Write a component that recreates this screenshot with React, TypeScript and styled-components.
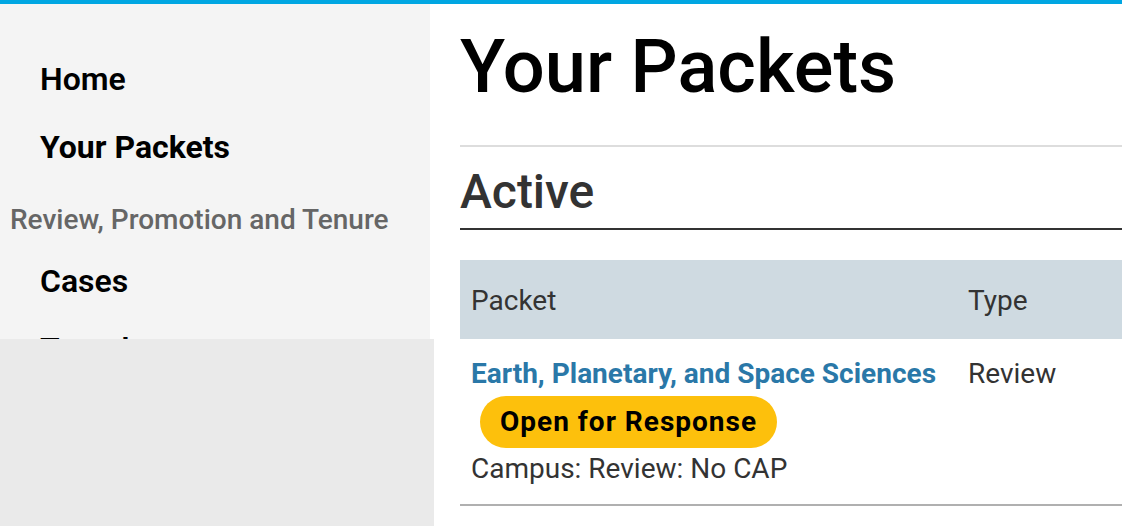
import React from "react";
import styled, { createGlobalStyle } from "styled-components";

const GlobalStyle = createGlobalStyle`
  html, body {
    margin: 0;
    padding: 0;
    background: #ffffff;
    font-family: Roboto, "Liberation Sans", Arial, sans-serif;
    overflow: hidden;
  }
  * { box-sizing: border-box; }
`;

const Page = styled.div`
  position: relative;
  width: 1122px;
  height: 526px;
  overflow: hidden;
  display: flex;
  flex-direction: column;
`;

const TopBar = styled.div`
  height: 4px;
  flex: none;
  background: #00a6e2;
`;

const Layout = styled.div`
  flex: 1;
  display: grid;
  grid-template-columns: 430px 1fr;
  min-height: 0;
`;

const Sidebar = styled.nav`
  background: #f4f4f4;
  padding-top: 41px;
  display: flex;
  flex-direction: column;
`;

const NavItem = styled.a<{ $active?: boolean }>`
  display: block;
  padding: 16px 40px;
  font-size: 32px;
  line-height: 36px;
  font-weight: ${(p) => (p.$active ? 700 : 600)};
  color: #000;
  text-decoration: none;
  white-space: nowrap;
`;

const NavSection = styled.div`
  margin: 23px 0 11px;
  padding-left: 10px;
  font-size: 28px;
  line-height: 32px;
  font-weight: 500;
  color: #666;
  white-space: nowrap;
`;

const Overlay = styled.div`
  position: absolute;
  left: 0;
  top: 339px;
  width: 434px;
  height: 187px;
  background: #eaeaea;
`;

const Main = styled.main`
  padding-left: 30px;
  min-width: 0;
  overflow: hidden;
`;

const Title = styled.h1`
  margin: 19px 0 0;
  font-size: 74px;
  line-height: 88px;
  font-weight: 500;
  color: #000;
  white-space: nowrap;
`;

const Rule = styled.hr`
  margin: 34px 0 0;
  border: 0;
  height: 2px;
  background: #dddddd;
`;

const SectionTitle = styled.h2`
  margin: 17px 0 0;
  padding-bottom: 8px;
  font-size: 48px;
  line-height: 56px;
  font-weight: 500;
  color: #333;
  border-bottom: 2px solid #333;
`;

const Table = styled.table`
  margin-top: 30px;
  width: 900px;
  border-collapse: collapse;
  font-size: 28px;
  line-height: 32px;
  color: #333;
`;

const HeadCell = styled.th<{ $width?: number }>`
  background: #cfdae1;
  text-align: left;
  font-weight: 400;
  padding: 25px 11px 22px;
  width: ${(p) => (p.$width ? `${p.$width}px` : "auto")};
`;

const Row = styled.tr`
  border-bottom: 2px solid #b0b0b0;
`;

const Cell = styled.td`
  vertical-align: top;
  padding: 19px 11px 19px;
  white-space: nowrap;
`;

const PacketLink = styled.a`
  display: block;
  color: #2a78a8;
  font-weight: 700;
  text-decoration: none;
`;

const Badge = styled.span`
  display: inline-block;
  margin: 6px 0 5px 9px;
  padding: 0 20px;
  height: 52px;
  line-height: 52px;
  border-radius: 26px;
  background: #fdc00c;
  color: #000;
  font-weight: 700;
  font-size: 28px;
  letter-spacing: 1px;
`;

const Meta = styled.div`
  color: #333;
`;

export default function App() {
  return (
    <>
      <GlobalStyle />
      <Page>
        <TopBar />
        <Layout>
          <Sidebar>
            <NavItem href="#">Home</NavItem>
            <NavItem href="#" $active>
              Your Packets
            </NavItem>
            <NavSection>Review, Promotion and Tenure</NavSection>
            <NavItem href="#">Cases</NavItem>
            <NavItem href="#">Templates</NavItem>
          </Sidebar>
          <Main>
            <Title>Your Packets</Title>
            <Rule />
            <SectionTitle>Active</SectionTitle>
            <Table>
              <thead>
                <tr>
                  <HeadCell $width={497}>Packet</HeadCell>
                  <HeadCell>Type</HeadCell>
                </tr>
              </thead>
              <tbody>
                <Row>
                  <Cell>
                    <PacketLink href="#">Earth, Planetary, and Space Sciences</PacketLink>
                    <Badge>Open for Response</Badge>
                    <Meta>Campus: Review: No CAP</Meta>
                  </Cell>
                  <Cell>Review</Cell>
                </Row>
              </tbody>
            </Table>
          </Main>
        </Layout>
        <Overlay />
      </Page>
    </>
  );
}
